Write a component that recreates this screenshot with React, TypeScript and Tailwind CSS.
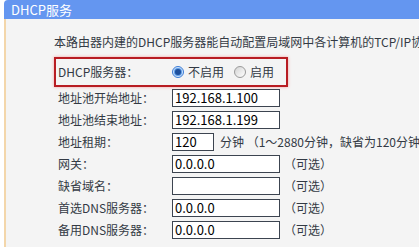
import React from 'react';

const font = { fontFamily: '"Noto Sans CJK SC", "Microsoft YaHei", sans-serif' };

const Radio: React.FC<{ checked?: boolean }> = ({ checked }) =>
  checked ? (
    <span className="w-[12px] h-[12px] rounded-full border border-[#3a7bd5] bg-[#cfe3fb] flex items-center justify-center shrink-0">
      <span className="w-[6px] h-[6px] rounded-full bg-[#1d4f9c] ring-1 ring-[#5b9be6]" />
    </span>
  ) : (
    <span className="block w-[12px] h-[12px] rounded-full border border-[#9a9a9a] bg-gradient-to-br from-[#d4d4d4] to-[#ffffff] shrink-0" />
  );

interface RowProps {
  label: string;
  value?: string;
  narrow?: boolean;
  hint: string;
}

const Row: React.FC<RowProps> = ({ label, value = '', narrow, hint }) => (
  <div className="flex items-center h-[22px] pl-[4px]">
    <span className="w-[114px] shrink-0">{label}</span>
    <div
      className={`${narrow ? 'w-[42px]' : 'w-[108px]'} h-[18px] shrink-0 bg-white border border-[#3c4450] text-black text-[13px] leading-[16px] pl-[2px]`}
    >
      {value}
    </div>
    <span className={`${narrow ? 'ml-[6px]' : 'ml-[4px]'} whitespace-nowrap`}>{hint}</span>
  </div>
);

export default function App() {
  const rows: RowProps[] = [
    { label: '地址池开始地址：', value: '192.168.1.100', hint: '' },
    { label: '地址池结束地址：', value: '192.168.1.199', hint: '' },
    { label: '地址租期：', value: '120', narrow: true, hint: '分钟 （1～2880分钟，缺省为120分钟）' },
    { label: '网关：', value: '0.0.0.0', hint: '（可选）' },
    { label: '缺省域名：', value: '', hint: '（可选）' },
    { label: '首选DNS服务器：', value: '0.0.0.0', hint: '（可选）' },
    { label: '备用DNS服务器：', value: '0.0.0.0', hint: '（可选）' },
  ];

  return (
    <div className="w-[419px] h-[247px] overflow-hidden bg-white text-[12px] text-[#333a44]" style={font}>
      <div className="ml-[4px] h-[19px] bg-[#6496f0] rounded-tl-[4px] pl-[7px] text-white text-[13px] leading-[19px]">
        DHCP服务
      </div>
      <div className="ml-[4px] h-[228px] border-l-2 border-[#f3d6aa] bg-[#f4f4f4] pl-[48px] pt-[15px] overflow-hidden">
        <div className="leading-[16px] whitespace-nowrap">
          本路由器内建的DHCP服务器能自动配置局域网中各计算机的TCP/IP协议。
        </div>
        <div className="mt-[7px] w-[234px] h-[30px] border-2 border-[#b81c22] shadow-[0_0_3px_#f3a0a0] flex items-center pl-[2px]">
          <span className="w-[114px] shrink-0">DHCP服务器：</span>
          <Radio checked />
          <span className="ml-[4px]">不启用</span>
          <span className="ml-[10px] flex">
            <Radio />
          </span>
          <span className="ml-[4px]">启用</span>
        </div>
        {rows.map(r => (
          <Row key={r.label} {...r} />
        ))}
      </div>
    </div>
  );
}
